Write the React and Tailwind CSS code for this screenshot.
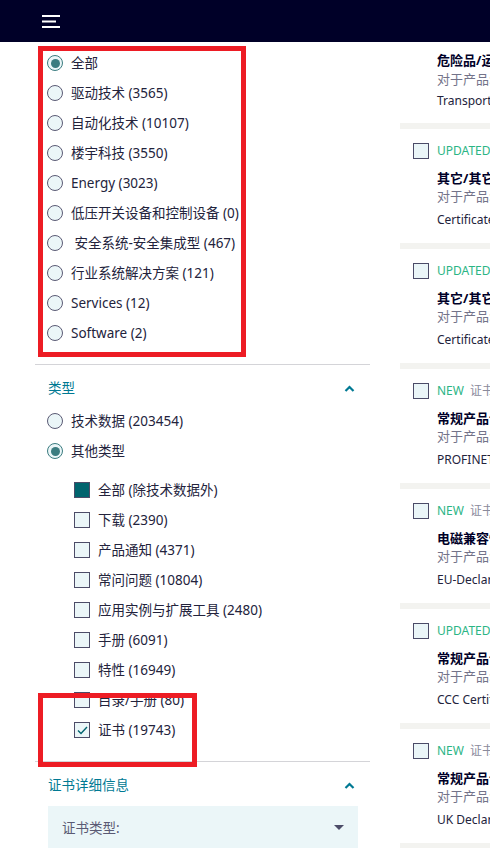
import React from "react";

const sectors = [
  { label: "全部", checked: true },
  { label: "驱动技术 (3565)" },
  { label: "自动化技术 (10107)" },
  { label: "楼宇科技 (3550)" },
  { label: "Energy (3023)" },
  { label: "低压开关设备和控制设备 (0)" },
  { label: " 安全系统-安全集成型 (467)" },
  { label: "行业系统解决方案 (121)" },
  { label: "Services (12)" },
  { label: "Software (2)" },
];

const types = [
  { label: "全部 (除技术数据外)", state: "filled" },
  { label: "下载 (2390)" },
  { label: "产品通知 (4371)" },
  { label: "常问问题 (10804)" },
  { label: "应用实例与扩展工具 (2480)" },
  { label: "手册 (6091)" },
  { label: "特性 (16949)" },
  { label: "目录/手册 (80)" },
  { label: "证书 (19743)", state: "checked" },
];

const cards = [
  { tag: "UPDATED", title: "其它/其它证书", desc: "Certificate" },
  { tag: "UPDATED", title: "其它/其它证书", desc: "Certificate" },
  { tag: "NEW", sub: "证书", title: "常规产品认证", desc: "PROFINET Certificate" },
  { tag: "NEW", sub: "证书", title: "电磁兼容性", desc: "EU-Declaration of Conformity" },
  { tag: "UPDATED", title: "常规产品认证", desc: "CCC Certificate" },
  { tag: "NEW", sub: "证书", title: "常规产品认证", desc: "UK Declaration of Conformity" },
];

const Radio = ({ checked }) => (
  <span
    className={`flex h-4 w-4 shrink-0 items-center justify-center rounded-full border-[1.5px] bg-[#ebf6f8] ${
      checked ? "border-[#3b7c80]" : "border-[#5a5a74]"
    }`}
  >
    {checked && <span className="h-[9px] w-[9px] rounded-full bg-[#3b7c80]" />}
  </span>
);

const Box = ({ state }) => (
  <span
    className={`flex h-4 w-4 shrink-0 items-center justify-center border-[1.5px] border-[#4c4c68] ${
      state === "filled" ? "bg-[#00646e]" : "bg-[#ebf6f8]"
    }`}
  >
    {state === "checked" && (
      <svg width="11" height="9" viewBox="0 0 11 9" fill="none">
        <path d="M1 4.5 L4 7.5 L10 1" stroke="#00646e" strokeWidth="1.4" />
      </svg>
    )}
  </span>
);

const ChevronUp = () => (
  <svg width="11" height="7" viewBox="0 0 11 7" fill="none">
    <path d="M1.5 6 L5.5 2 L9.5 6" stroke="#007993" strokeWidth="2.2" />
  </svg>
);

const Card = ({ card }) => (
  <div className="h-[114px] px-[13px] pt-[14px]">
    <div className="flex h-4 items-center">
      <Box />
      <span className="ml-2 text-[12px] text-[#2bb585]">{card.tag}</span>
      {card.sub && <span className="ml-[6px] text-[12px] text-[#8a8a9c]">{card.sub}</span>}
    </div>
    <div className="mt-[10px] pl-6 text-[13px] font-bold leading-[18px] text-[#000028]">{card.title}</div>
    <div className="pl-6 text-[13px] leading-[19px] text-[#737389]">对于产品: 6ES7</div>
    <div className="mt-[6px] pl-6 text-[12px] leading-[16px] text-[#23233c]">{card.desc}</div>
  </div>
);

export default function App() {
  return (
    <div
      className="relative h-[848px] w-[490px] overflow-hidden bg-white"
      style={{ fontFamily: '"Noto Sans", "Noto Sans CJK SC", sans-serif' }}
    >
      <header className="flex h-[42px] items-center bg-[#000028] pl-[42px]">
        <svg width="18" height="13" viewBox="0 0 18 13" fill="none">
          <path d="M0 1 H18 M0 6.5 H14 M0 12 H18" stroke="#ffffff" strokeWidth="2" />
        </svg>
      </header>

      <div className="flex whitespace-nowrap">
        <aside className="w-[370px] shrink-0 pl-[35px]">
          <div className="pl-3 pt-[6px]">
            {sectors.map((s) => (
              <div key={s.label} className="flex h-[30px] items-center gap-2 text-[13.5px] text-[#23233c]">
                <Radio checked={s.checked} />
                <span className="whitespace-pre">{s.label}</span>
              </div>
            ))}
          </div>

          <div className="mt-4 border-t border-[#d4d4d8] pt-2">
            <div className="flex h-[30px] items-center justify-between pl-[13px] pr-[15px]">
              <span className="text-[13.5px] text-[#007993]">类型</span>
              <ChevronUp />
            </div>
            <div className="pl-3 pt-[3px]">
              <div className="flex h-[30px] items-center gap-2 text-[13.5px] text-[#23233c]">
                <Radio />
                <span>技术数据 (203454)</span>
              </div>
              <div className="flex h-[30px] items-center gap-2 text-[13.5px] text-[#23233c]">
                <Radio checked />
                <span>其他类型</span>
              </div>
            </div>
            <div className="pl-[39px] pt-[9px]">
              {types.map((t) => (
                <div key={t.label} className="flex h-[30px] items-center gap-2 text-[13.5px] text-[#23233c]">
                  <Box state={t.state} />
                  <span>{t.label}</span>
                </div>
              ))}
            </div>
          </div>

          <div className="mt-[16px] border-t border-[#d4d4d8] pt-2">
            <div className="flex h-[30px] items-center justify-between pl-[13px] pr-[15px]">
              <span className="text-[13.5px] text-[#007993]">证书详细信息</span>
              <ChevronUp />
            </div>
            <div className="ml-[13px] mr-3 mt-[6px] flex h-[44px] items-center justify-between bg-[#ebf6f8] pl-[14px] pr-[14px]">
              <span className="text-[13.5px] text-[#5a5a74]">证书类型:</span>
              <svg width="10" height="6" viewBox="0 0 10 6">
                <path d="M0 0 H10 L5 5 Z" fill="#4c4c68" />
              </svg>
            </div>
          </div>
        </aside>

        <main className="ml-[30px] w-[320px] shrink-0">
          <div className="h-[81px] pl-[37px] pt-[9px]">
            <div className="text-[13px] font-bold leading-[18px] text-[#000028]">危险品/运输信息</div>
            <div className="text-[13px] leading-[21px] text-[#737389]">对于产品: 6ES7</div>
            <div className="mt-[3px] text-[12px] leading-[16px] text-[#23233c]">Transport Information</div>
          </div>
          {cards.map((c, i) => (
            <div key={i}>
              <div className="h-[6px] bg-[#f3f3f0]" />
              <Card card={c} />
            </div>
          ))}
          <div className="h-[6px] bg-[#f3f3f0]" />
        </main>
      </div>

      {/* annotation boxes */}
      <div className="pointer-events-none absolute left-[38px] top-[46px] h-[311px] w-[208px] border-[5px] border-[#ed1c24]" />
      <div className="pointer-events-none absolute left-[38px] top-[693px] h-[74px] w-[159px] border-[5px] border-[#ed1c24]" />
    </div>
  );
}
